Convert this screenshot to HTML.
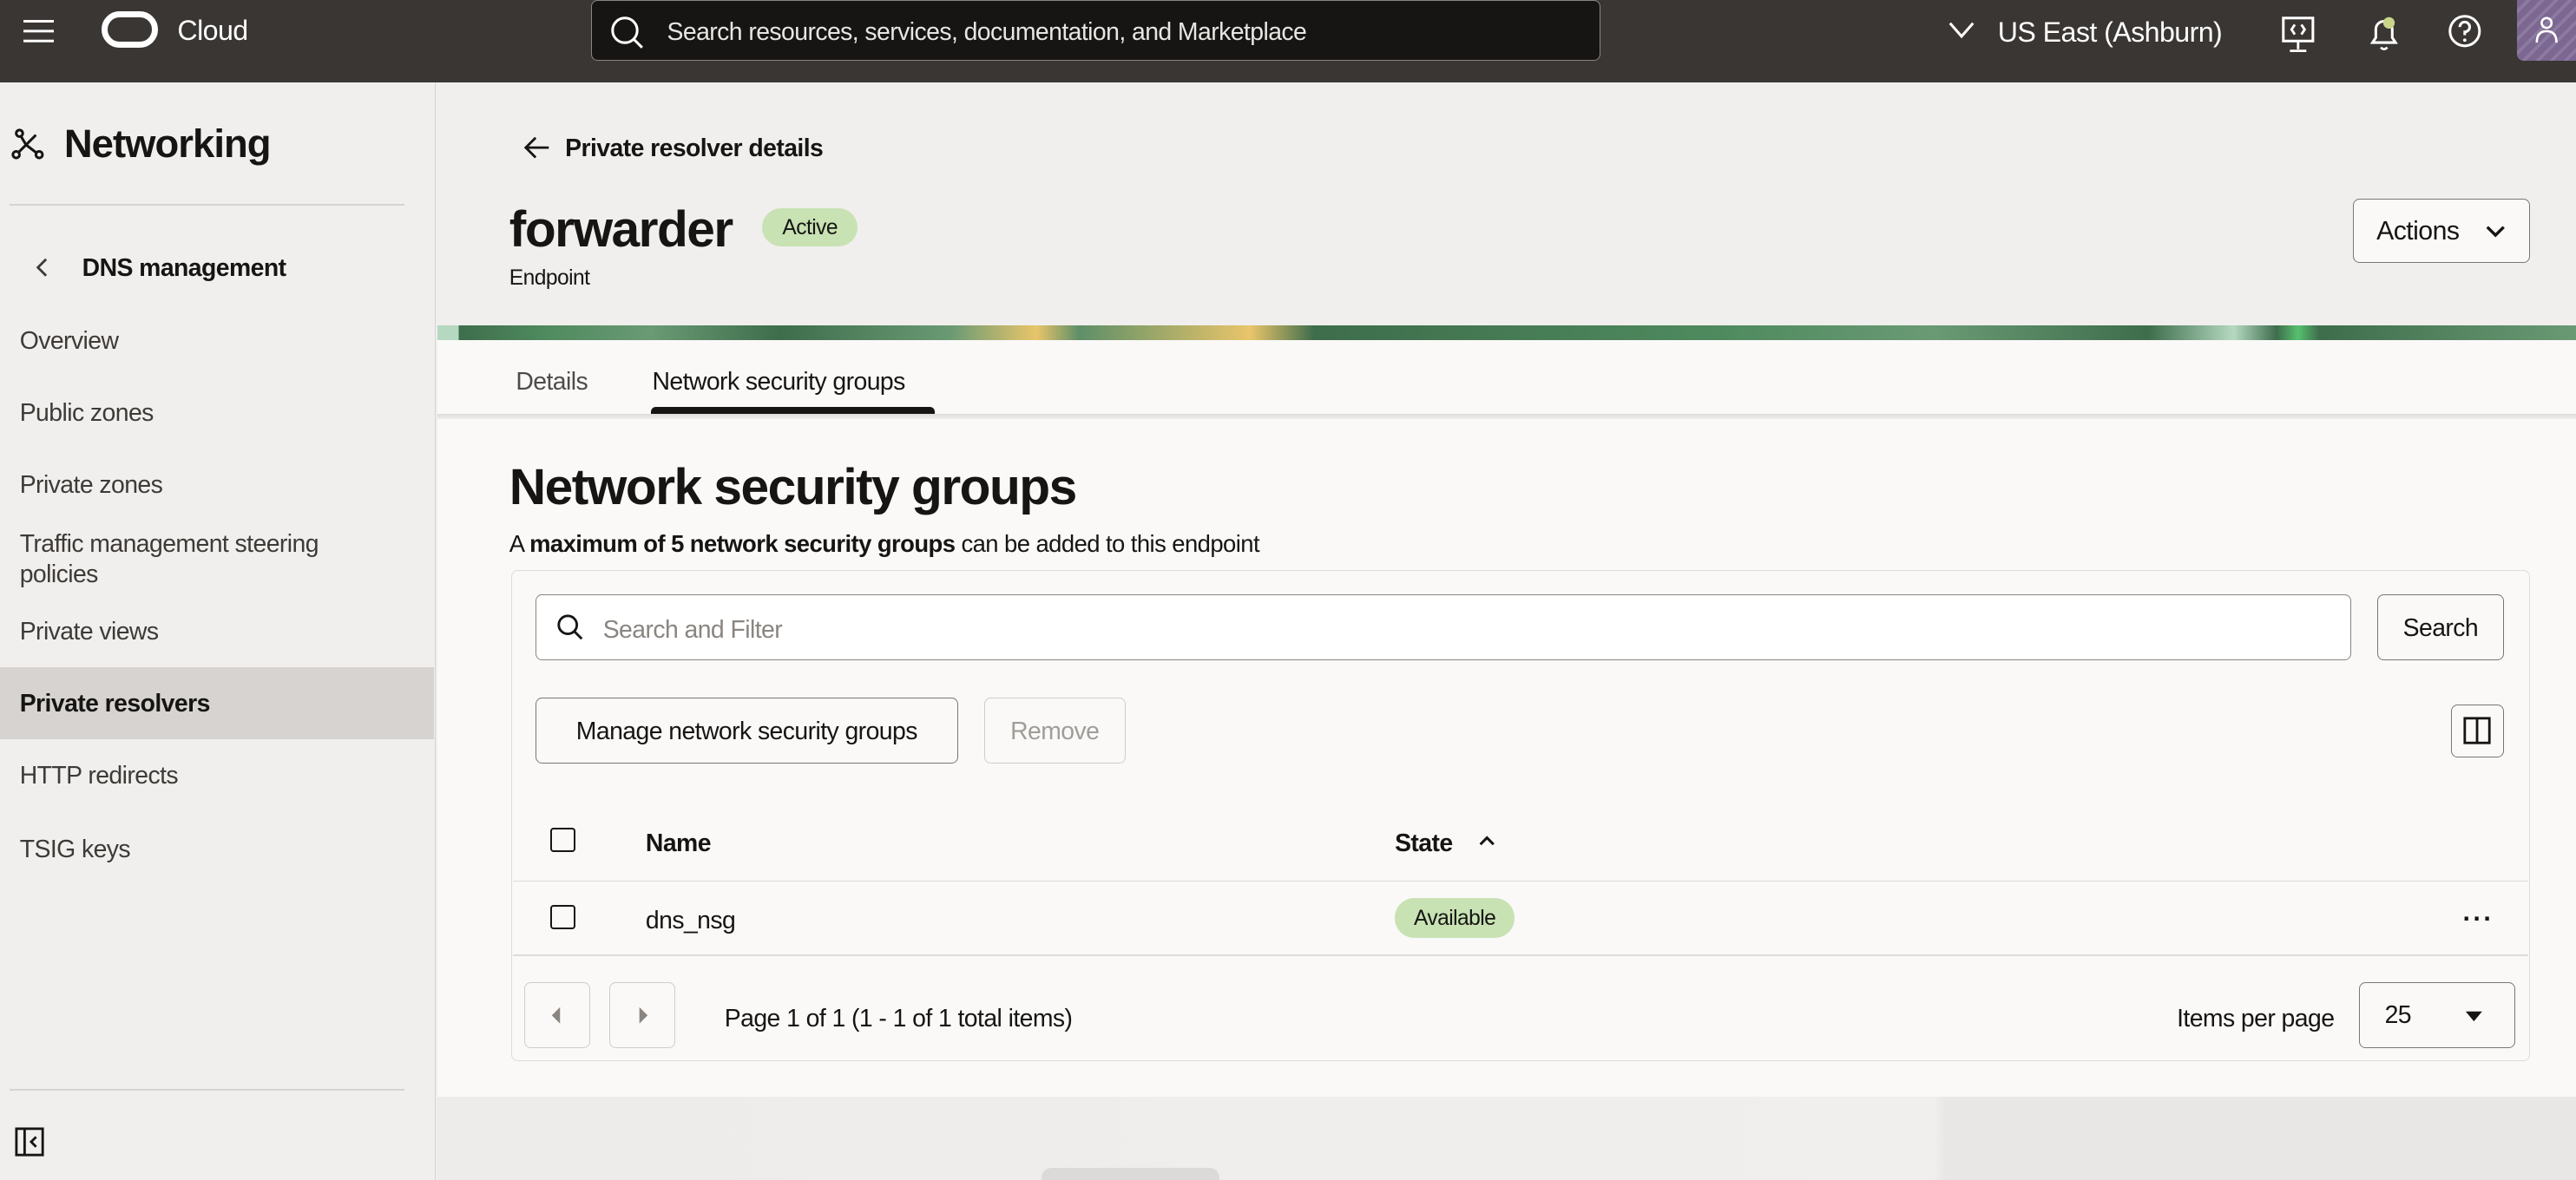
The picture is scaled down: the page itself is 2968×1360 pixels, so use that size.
<!DOCTYPE html>
<html><head><meta charset="utf-8">
<style>
*{box-sizing:border-box;margin:0;padding:0}
html,body{width:2968px;height:1360px;overflow:hidden;background:#f1efed}
#r{zoom:1.8929;width:1568px;height:719px;position:relative;font-family:"Liberation Sans",sans-serif;color:#161513;letter-spacing:-0.3px}
.a{position:absolute}
.t{margin-top:1px}
.hdr{left:0;top:0;width:1568px;height:50px;background:#3a3633}
.side{left:0;top:50px;width:265px;height:669px;background:#f1efed;border-right:1px solid #d6d3d0}
.nav{position:absolute;left:12px;font-size:15px;color:#3d3a37;margin-top:1px}
.btn{position:absolute;border:1px solid #7a7672;border-radius:4px;background:#faf9f8;font-size:15px;font-weight:bold;display:flex;align-items:center;justify-content:center;padding-top:1px}
.cb{position:absolute;width:15px;height:15px;border:1.5px solid #161513;border-radius:2px}
</style></head><body><div id="r">
<div class="a hdr"></div>
<div class="a" style="left:14px;top:12px;width:19px;height:2px;background:#fff;box-shadow:0 6px 0 #fff,0 12px 0 #fff"></div>
<div class="a" style="left:62px;top:7px;width:34px;height:22px;border:4px solid #fff;border-radius:11px"></div>
<div class="a t" style="left:108px;top:8px;color:#fff;font-size:17px">Cloud</div>
<div class="a" style="left:360px;top:0;width:614px;height:37px;background:#161513;border:1px solid #8a8580;border-radius:4px"></div>
<svg class="a" style="left:371px;top:9px" width="22" height="22" viewBox="0 0 22 22"><circle cx="9.5" cy="9.5" r="7.5" fill="none" stroke="#fff" stroke-width="1.6"/><path d="M15 15l5 5" stroke="#fff" stroke-width="1.6"/></svg>
<div class="a t" style="left:406px;top:10px;color:#e8e6e3;font-size:15px">Search resources, services, documentation, and Marketplace</div>
<svg class="a" style="left:1185px;top:12px" width="18" height="12" viewBox="0 0 18 12"><path d="M2 2l7 8 7-8" fill="none" stroke="#fff" stroke-width="1.6"/></svg>
<div class="a t" style="left:1216px;top:9px;color:#fff;font-size:17px">US East (Ashburn)</div>
<svg class="a" style="left:1388px;top:9px" width="22" height="24" viewBox="0 0 22 24"><rect x="2" y="2" width="18" height="14" fill="none" stroke="#fff" stroke-width="1.6"/><path d="M11 16v5M6 22h10M9 6l-2 3 2 3M13 6l2 3-2 3" fill="none" stroke="#fff" stroke-width="1.5"/></svg>
<svg class="a" style="left:1440px;top:8px" width="22" height="24" viewBox="0 0 22 24"><path d="M4 18h14l-2-3V10a5 5 0 0 0-10 0v5z" fill="none" stroke="#fff" stroke-width="1.6"/><path d="M9 21q2 2 4 0" fill="none" stroke="#fff" stroke-width="1.4"/><circle cx="14" cy="6" r="3.5" fill="#c9d68a"/></svg>
<svg class="a" style="left:1489px;top:8px" width="22" height="22" viewBox="0 0 22 22"><circle cx="11" cy="11" r="9" fill="none" stroke="#fff" stroke-width="1.6"/><path d="M8 8.5a3 3 0 1 1 3 3v2" fill="none" stroke="#fff" stroke-width="1.6"/><circle cx="11" cy="16.5" r="1" fill="#fff"/></svg>
<div class="a" style="left:1532px;top:0;width:36px;height:37px;background:repeating-linear-gradient(135deg,#7b6791 0 4px,#8d7aa1 4px 6px);border-radius:0 0 0 4px"></div>
<svg class="a" style="left:1542px;top:9px" width="16" height="18" viewBox="0 0 16 18"><circle cx="8" cy="5" r="3" fill="none" stroke="#fff" stroke-width="1.4"/><path d="M2 17q0-7 6-7t6 7" fill="none" stroke="#fff" stroke-width="1.4"/></svg>

<div class="a side"></div>
<svg class="a" style="left:7px;top:78px" width="20" height="20" viewBox="0 0 20 20"><g fill="none" stroke="#161513" stroke-width="1.6"><circle cx="5" cy="3" r="2"/><circle cx="3" cy="16" r="2"/><circle cx="17" cy="16" r="2"/><path d="M6 5l3 5M4.5 14.5L9 10l6.5 5M9 10l6-6"/></g></svg>
<div class="a t" style="left:39px;top:73px;font-size:24px;font-weight:bold;letter-spacing:-0.5px">Networking</div>
<div class="a" style="left:6px;top:124px;width:240px;height:1px;background:#d6d3d0"></div>
<svg class="a" style="left:20px;top:156px" width="12" height="14" viewBox="0 0 12 14"><path d="M8 2L3 7l5 5" fill="none" stroke="#3d3a37" stroke-width="1.5"/></svg>
<div class="a t" style="left:50px;top:154px;font-size:15px;font-weight:bold">DNS management</div>
<div class="nav" style="top:198px">Overview</div>
<div class="nav" style="top:242px">Public zones</div>
<div class="nav" style="top:286px">Private zones</div>
<div class="nav" style="top:321px;line-height:19px;width:230px">Traffic management steering policies</div>
<div class="nav" style="top:375px">Private views</div>
<div class="a" style="left:0;top:406px;width:264px;height:44px;background:#d6d3d0"></div>
<div class="nav" style="top:419px;font-weight:bold;color:#161513">Private resolvers</div>
<div class="nav" style="top:463px">HTTP redirects</div>
<div class="nav" style="top:508px">TSIG keys</div>
<div class="a" style="left:6px;top:663px;width:240px;height:1px;background:#d6d3d0"></div>
<svg class="a" style="left:9px;top:686px" width="18" height="18" viewBox="0 0 18 18"><rect x="1" y="1" width="16" height="16" fill="none" stroke="#161513" stroke-width="1.5"/><path d="M6 1v16M13 6l-3 3 3 3" fill="none" stroke="#161513" stroke-width="1.5"/></svg>

<svg class="a" style="left:318px;top:82px" width="18" height="16" viewBox="0 0 18 16"><path d="M16 8H3M8 2L2 8l6 6" fill="none" stroke="#161513" stroke-width="1.5"/></svg>
<div class="a t" style="left:344px;top:81px;font-size:15px;font-weight:bold">Private resolver details</div>
<div class="a t" style="left:310px;top:121px;font-size:31px;font-weight:bold;letter-spacing:-0.8px">forwarder</div>
<div class="a" style="left:464px;top:127px;width:58px;height:23px;background:#c8e2b4;border-radius:12px;font-size:13px;text-align:center;line-height:24px">Active</div>
<div class="a t" style="left:310px;top:161px;font-size:13px">Endpoint</div>
<div class="btn" style="left:1432px;top:121px;width:108px;height:39px;justify-content:flex-start;padding-left:14px;font-weight:normal;font-size:16px">Actions</div>
<svg class="a" style="left:1512px;top:135px" width="14" height="12" viewBox="0 0 14 12"><path d="M2 3l5 5 5-5" fill="none" stroke="#161513" stroke-width="1.8"/></svg>
<div class="a" style="left:266px;top:198px;width:1302px;height:9px;background:linear-gradient(90deg,#b5d9c0 0,#b5d9c0 1%,#3e6d4c 1%,#4f8a5e 5%,#6a9a74 10%,#3e6d4c 16%,#6a9a74 24%,#e9c56a 28%,#5e8f68 30%,#e9c56a 38%,#3e6d4c 41%,#4f8a5e 60%,#6a9a74 70%,#3e6d4c 80%,#b5d9c0 84%,#3e6d4c 86%,#57c06e 87%,#3e6d4c 88%,#6a9a74 100%)"></div>
<div class="a" style="left:266px;top:207px;width:1302px;height:461px;background:#faf9f8"></div>
<div class="a" style="left:266px;top:252px;width:1302px;height:3px;background:linear-gradient(#dedbd8,#f1efed)"></div>
<div class="a t" style="left:314px;top:223px;font-size:15px;color:#4f4b48">Details</div>
<div class="a t" style="left:397px;top:223px;font-size:15px">Network security groups</div>
<div class="a" style="left:396px;top:248px;width:173px;height:4px;background:#161513;border-radius:3px 3px 0 0"></div>
<div class="a t" style="left:310px;top:278px;font-size:31px;font-weight:bold;letter-spacing:-0.8px">Network security groups</div>
<div class="a t" style="left:310px;top:322px;font-size:14.5px">A <b>maximum of 5 network security groups</b> can be added to this endpoint</div>
<div class="a" style="left:311px;top:347px;width:1229px;height:299px;border:1px solid #dedbd8;border-radius:4px"></div>
<div class="a" style="left:326px;top:362px;width:1105px;height:40px;border:1px solid #8a8580;border-radius:4px;background:#fff"></div>
<svg class="a" style="left:338px;top:373px" width="18" height="18" viewBox="0 0 18 18"><circle cx="7.5" cy="7.5" r="5.5" fill="none" stroke="#161513" stroke-width="1.5"/><path d="M11.5 11.5l4.5 4.5" stroke="#161513" stroke-width="1.5"/></svg>
<div class="a t" style="left:367px;top:374px;font-size:15px;color:#8a8580">Search and Filter</div>
<div class="btn" style="left:1447px;top:362px;width:77px;height:40px;font-weight:normal">Search</div>
<div class="btn" style="left:326px;top:425px;width:257px;height:40px;font-weight:normal">Manage network security groups</div>
<div class="btn" style="left:599px;top:425px;width:86px;height:40px;font-weight:normal;color:#a09c98;border-color:#d0ccc8">Remove</div>
<div class="btn" style="left:1492px;top:429px;width:32px;height:32px"></div>
<svg class="a" style="left:1499px;top:436px" width="18" height="18" viewBox="0 0 18 18"><rect x="1.5" y="1.5" width="15" height="15" fill="none" stroke="#161513" stroke-width="1.5"/><path d="M9 1.5v15" stroke="#161513" stroke-width="1.5"/></svg>
<div class="cb" style="left:335px;top:504px"></div>
<div class="a t" style="left:393px;top:504px;font-size:15px;font-weight:bold">Name</div>
<div class="a t" style="left:849px;top:504px;font-size:15px;font-weight:bold">State</div>
<svg class="a" style="left:898px;top:506px" width="14" height="12" viewBox="0 0 14 12"><path d="M3 8l4-4 4 4" fill="none" stroke="#161513" stroke-width="1.6"/></svg>
<div class="a" style="left:312px;top:536px;width:1227px;height:1px;background:#dedbd8"></div>
<div class="cb" style="left:335px;top:551px"></div>
<div class="a t" style="left:393px;top:551px;font-size:15px">dns_nsg</div>
<div class="a" style="left:849px;top:547px;width:73px;height:24px;background:#c8e2b4;border-radius:12px;font-size:13px;text-align:center;line-height:25px">Available</div>
<div class="a t" style="left:1499px;top:550px;font-size:16px;font-weight:bold;letter-spacing:1px">···</div>
<div class="a" style="left:312px;top:581px;width:1227px;height:1px;background:#dedbd8"></div>
<div class="btn" style="left:319px;top:598px;width:40px;height:40px;border-color:#d0ccc8"></div>
<div class="btn" style="left:371px;top:598px;width:40px;height:40px;border-color:#d0ccc8"></div>
<svg class="a" style="left:334px;top:611px" width="10" height="14" viewBox="0 0 10 14"><path d="M7 2L2 7l5 5z" fill="#8a8580"/></svg>
<svg class="a" style="left:386px;top:611px" width="10" height="14" viewBox="0 0 10 14"><path d="M3 2l5 5-5 5z" fill="#8a8580"/></svg>
<div class="a t" style="left:441px;top:611px;font-size:15px">Page 1 of 1 (1 - 1 of 1 total items)</div>
<div class="a t" style="left:1325px;top:611px;font-size:15px">Items per page</div>
<div class="btn" style="left:1436px;top:598px;width:95px;height:40px;justify-content:flex-start;padding-left:15px;font-weight:normal">25</div>
<svg class="a" style="left:1500px;top:614px" width="12" height="10" viewBox="0 0 12 10"><path d="M1 2h10L6 8z" fill="#161513"/></svg>
<div class="a" style="left:266px;top:668px;width:1302px;height:51px;background:linear-gradient(90deg,#eeecea 0,#f1efed 70%,#e9e7e5 70.5%,#e9e7e5 100%)"></div>
<div class="a" style="left:634px;top:711px;width:108px;height:8px;background:#dcdad8;border-radius:6px 6px 0 0"></div>
</div></body></html>
